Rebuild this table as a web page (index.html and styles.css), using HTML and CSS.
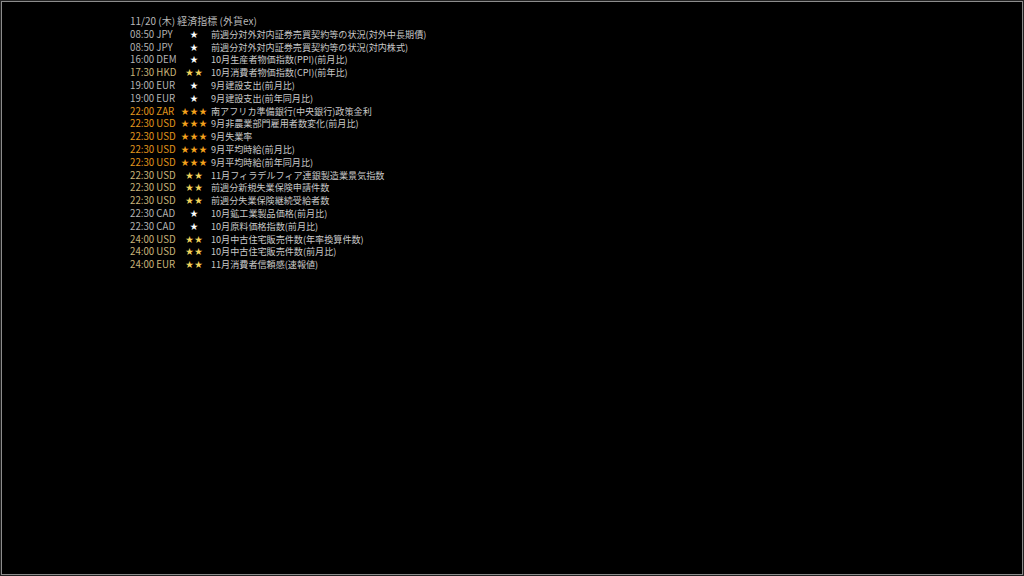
FILE: index.html
```html
<!DOCTYPE html>
<html lang="ja">
<head>
<meta charset="utf-8">
<title>経済指標</title>
<link rel="stylesheet" href="styles.css">
</head>
<body>
<div class="frame">
  <div class="list">
    <div class="header">11/20 (木) 経済指標 (外貨ex)</div>
    <div class="row r1"><span class="time">08:50 JPY</span><span class="stars">★</span><span class="desc">前週分対外対内証券売買契約等の状況(対外中長期債)</span></div>
    <div class="row r1"><span class="time">08:50 JPY</span><span class="stars">★</span><span class="desc">前週分対外対内証券売買契約等の状況(対内株式)</span></div>
    <div class="row r1"><span class="time">16:00 DEM</span><span class="stars">★</span><span class="desc">10月生産者物価指数(PPI)(前月比)</span></div>
    <div class="row r2"><span class="time">17:30 HKD</span><span class="stars">★★</span><span class="desc">10月消費者物価指数(CPI)(前年比)</span></div>
    <div class="row r1"><span class="time">19:00 EUR</span><span class="stars">★</span><span class="desc">9月建設支出(前月比)</span></div>
    <div class="row r1"><span class="time">19:00 EUR</span><span class="stars">★</span><span class="desc">9月建設支出(前年同月比)</span></div>
    <div class="row r3"><span class="time">22:00 ZAR</span><span class="stars">★★★</span><span class="desc">南アフリカ準備銀行(中央銀行)政策金利</span></div>
    <div class="row r3"><span class="time">22:30 USD</span><span class="stars">★★★</span><span class="desc">9月非農業部門雇用者数変化(前月比)</span></div>
    <div class="row r3"><span class="time">22:30 USD</span><span class="stars">★★★</span><span class="desc">9月失業率</span></div>
    <div class="row r3"><span class="time">22:30 USD</span><span class="stars">★★★</span><span class="desc">9月平均時給(前月比)</span></div>
    <div class="row r3"><span class="time">22:30 USD</span><span class="stars">★★★</span><span class="desc">9月平均時給(前年同月比)</span></div>
    <div class="row r2"><span class="time">22:30 USD</span><span class="stars">★★</span><span class="desc">11月フィラデルフィア連銀製造業景気指数</span></div>
    <div class="row r2"><span class="time">22:30 USD</span><span class="stars">★★</span><span class="desc">前週分新規失業保険申請件数</span></div>
    <div class="row r2"><span class="time">22:30 USD</span><span class="stars">★★</span><span class="desc">前週分失業保険継続受給者数</span></div>
    <div class="row r1"><span class="time">22:30 CAD</span><span class="stars">★</span><span class="desc">10月鉱工業製品価格(前月比)</span></div>
    <div class="row r1"><span class="time">22:30 CAD</span><span class="stars">★</span><span class="desc">10月原料価格指数(前月比)</span></div>
    <div class="row r2"><span class="time">24:00 USD</span><span class="stars">★★</span><span class="desc">10月中古住宅販売件数(年率換算件数)</span></div>
    <div class="row r2"><span class="time">24:00 USD</span><span class="stars">★★</span><span class="desc">10月中古住宅販売件数(前月比)</span></div>
    <div class="row r2"><span class="time">24:00 EUR</span><span class="stars">★★</span><span class="desc">11月消費者信頼感(速報値)</span></div>
  </div>
</div>
</body>
</html>
```
FILE: styles.css
```css
html, body {
  margin: 0;
  padding: 0;
  background: #222;
  width: 1024px;
  height: 576px;
  overflow: hidden;
}
.frame {
  box-sizing: border-box;
  margin: 1px;
  width: 1022px;
  height: 574px;
  border: 1px solid #8c8c8c;
  background: #000;
  padding: 13px 0 0 128px;
  font-family: "Noto Sans CJK JP", "Noto Sans", sans-serif;
  color: #b8b8b8;
}
.list {
  display: flex;
  flex-direction: column;
}
.header {
  font-size: 10px;
  line-height: 12.8px;
  height: 12.8px;
  color: #b8b8b8;
}
.row {
  display: grid;
  grid-template-columns: 49px 29px auto;
  column-gap: 1px;
  align-items: center;
  height: 12.8px;
  line-height: 12.8px;
}
.time {
  font-size: 9.7px;
  white-space: nowrap;
}
.stars {
  font-size: 8px;
  text-align: center;
  letter-spacing: 1px;
  white-space: nowrap;
}
.desc {
  margin-left: 1px;
  font-size: 9.1px;
  color: #c8c8c8;
  white-space: nowrap;
}
.r1 .time { color: #b4b4b4; }
.r1 .stars { color: #ffffff; }
.r2 .time { color: #c8b47a; }
.r2 .stars { color: #f2d35a; }
.r3 .time { color: #e0961c; }
.r3 .stars { color: #f5a21c; }
```
